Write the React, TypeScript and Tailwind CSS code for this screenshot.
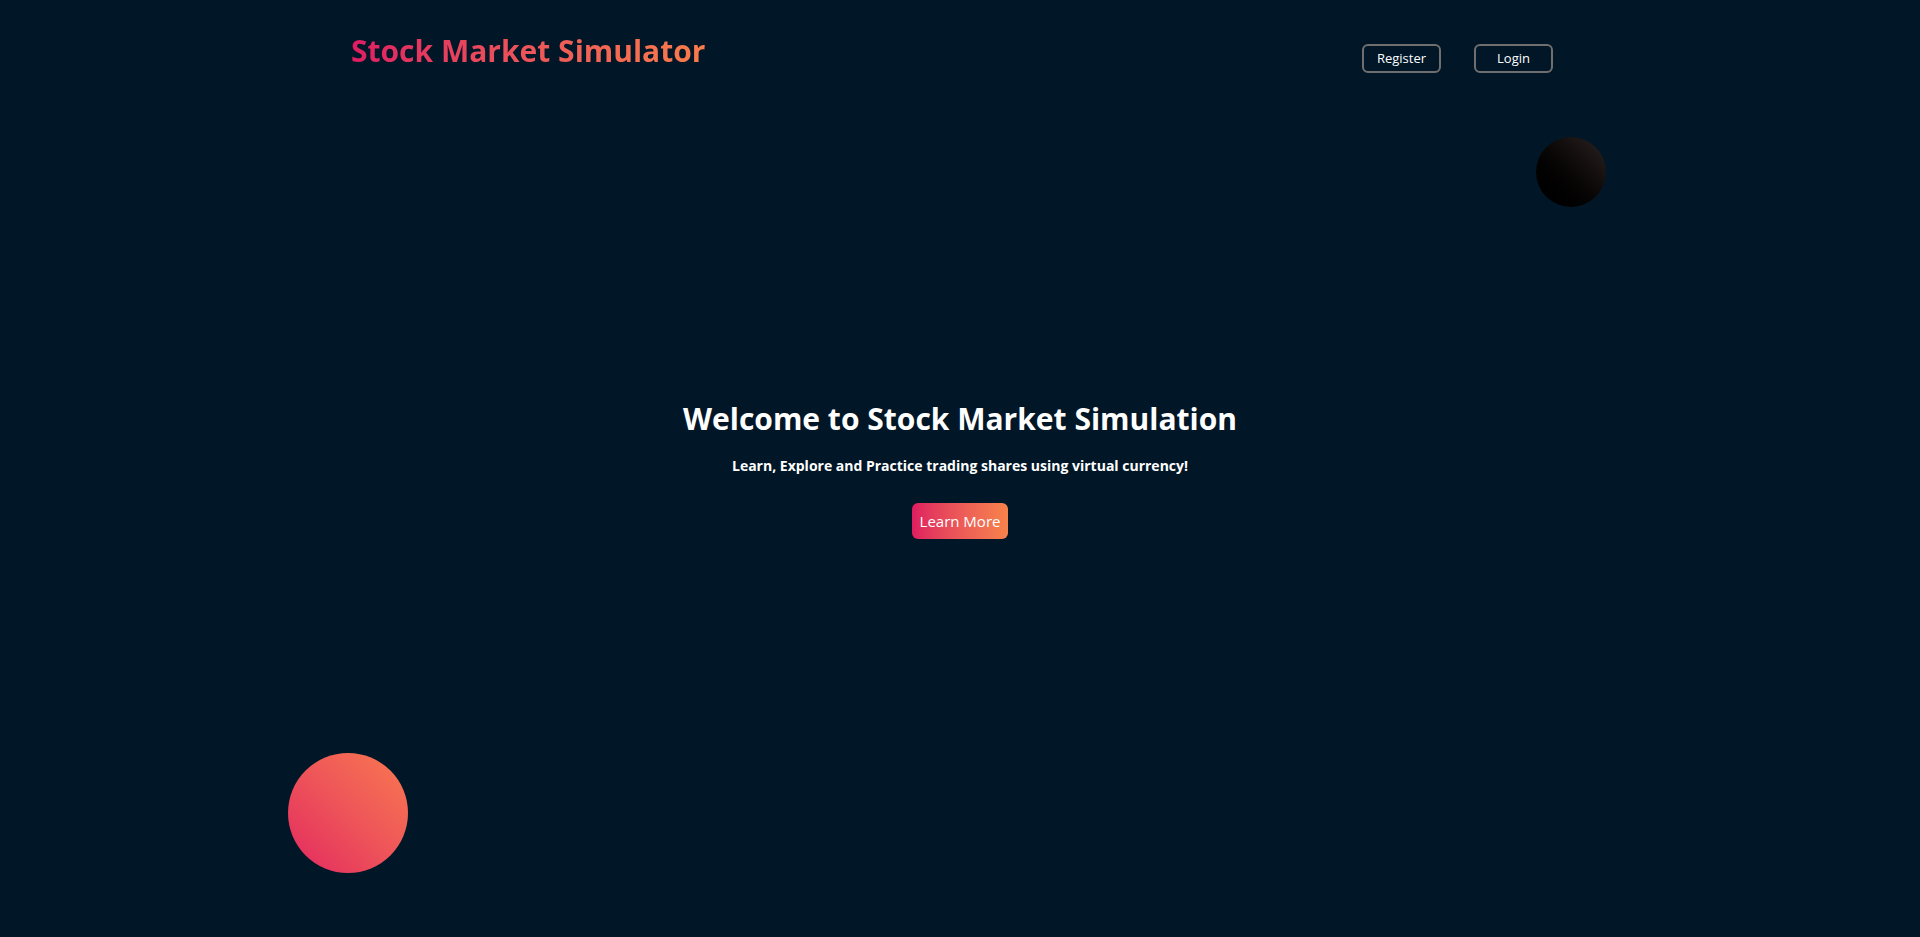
import React from "react";

const font = { fontFamily: '"Open Sans", "Noto Sans", sans-serif' };

const App = () => {
  return (
    <div
      className="relative h-[937px] w-full overflow-hidden bg-[#011627] text-white"
      style={font}
    >
      <header className="flex items-start justify-between pl-[351px] pr-[367px] pt-[33px]">
        <h1 className="bg-gradient-to-r from-[#df1b62] to-[#f97c4a] bg-clip-text text-[30px] font-bold leading-[36px] text-transparent">
          Stock Market Simulator
        </h1>
        <nav className="flex gap-[33px] pt-[11px]">
          <button className="h-[29px] w-[79px] rounded-[6px] border-2 border-[#6f6f6f] text-[13px] text-white">
            Register
          </button>
          <button className="h-[29px] w-[79px] rounded-[6px] border-2 border-[#6f6f6f] text-[13px] text-white">
            Login
          </button>
        </nav>
      </header>

      <main className="flex flex-col items-center pt-[326px]">
        <h2 className="text-[30px] font-bold leading-[40px]">
          Welcome to Stock Market Simulation
        </h2>
        <p className="mt-[17px] text-[14px] font-bold leading-[20px]">
          Learn, Explore and Practice trading shares using virtual currency!
        </p>
        <button className="mt-[27px] h-[36px] w-[96px] rounded-[6px] bg-gradient-to-r from-[#df1b5f] to-[#f7834a] text-[15px] text-white">
          Learn More
        </button>
      </main>

      <div className="absolute left-[1536px] top-[137px] h-[70px] w-[70px] rounded-full bg-gradient-to-bl from-[#2b2322] to-[#000000]" />
      <div className="absolute left-[288px] top-[753px] h-[120px] w-[120px] rounded-full bg-gradient-to-tr from-[#e3215f] to-[#f8784e]" />
    </div>
  );
};

export default App;
